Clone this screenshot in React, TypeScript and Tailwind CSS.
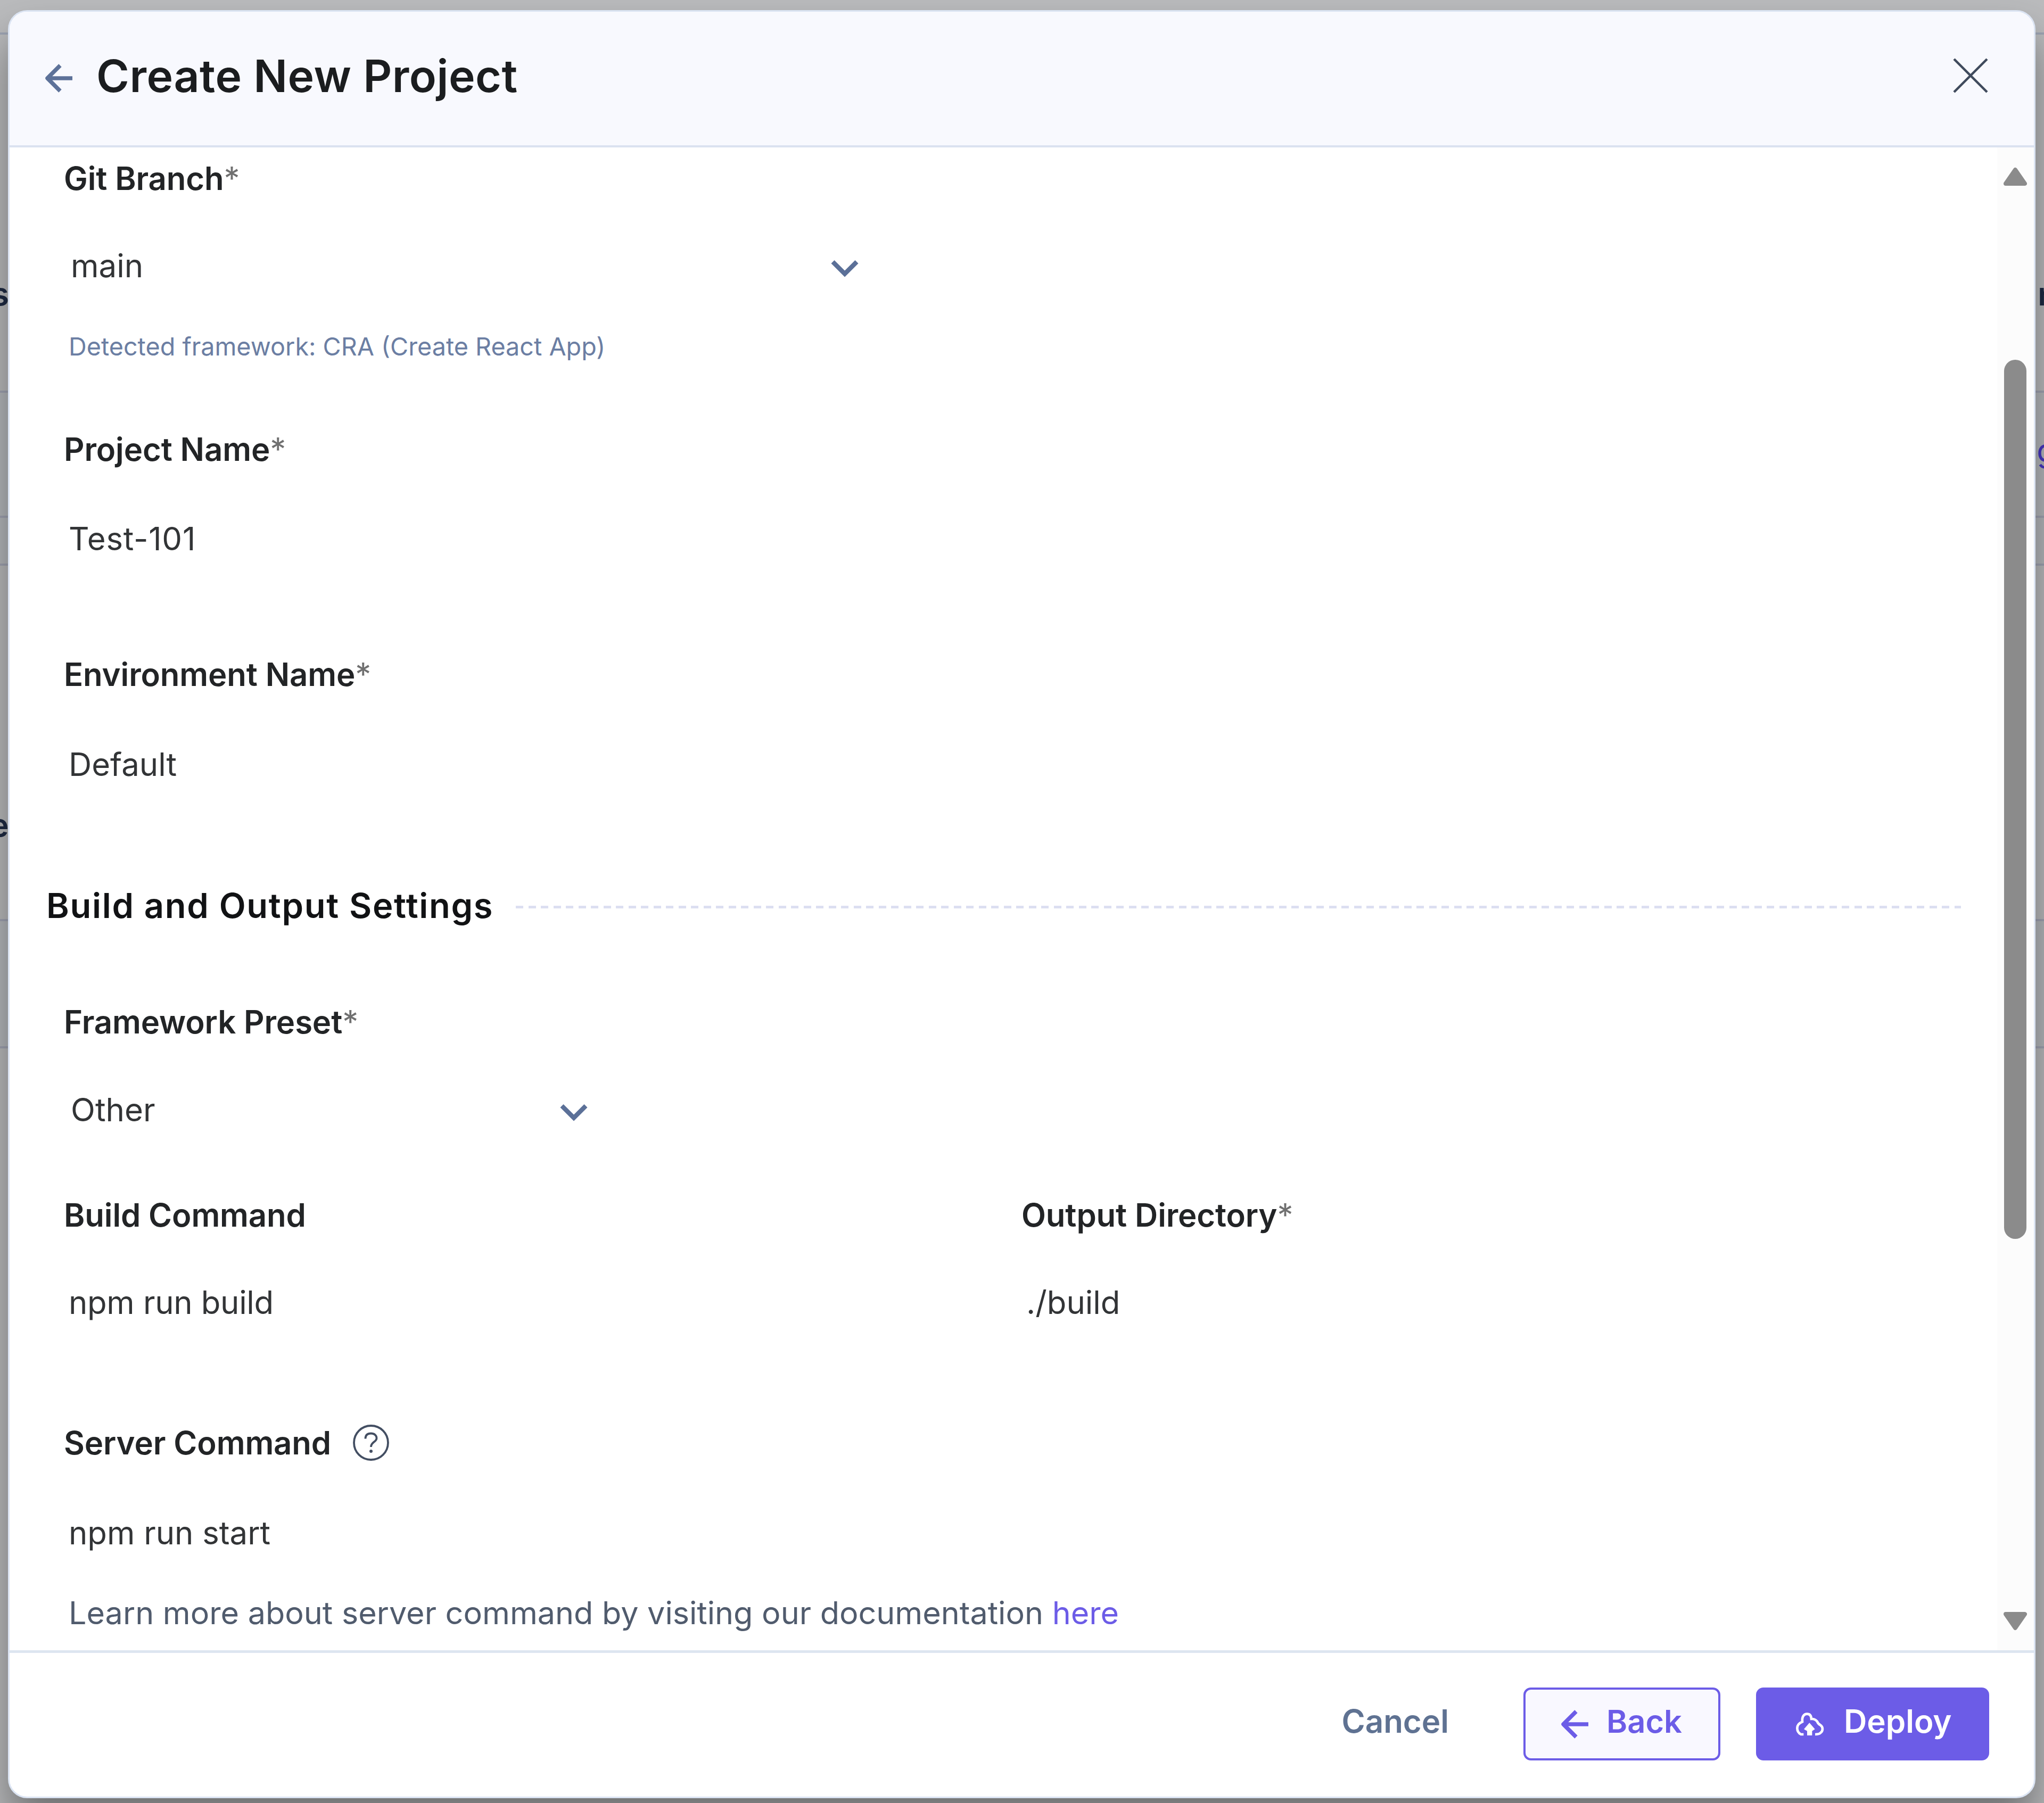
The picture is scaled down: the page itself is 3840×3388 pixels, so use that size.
import type { ReactNode } from "react";

interface FieldProps {
	label: string;
	required?: boolean;
	extra?: ReactNode;
	className?: string;
	children: ReactNode;
}

function Field(props: FieldProps) {
	return (
		<div className={`flex flex-col ${props.className ?? ""}`}>
			<div className="flex h-[60px] items-center text-[59.8px] leading-[60px] font-semibold tracking-[-0.1px] text-[#222426]">
				<span>
					{props.label}
					{props.required && <span className="font-normal text-[#707070]">*</span>}
				</span>
				{props.extra}
			</div>
			{props.children}
		</div>
	);
}

function Value(props: { className: string; children: ReactNode }) {
	return (
		<div className={`pl-[9px] text-[59.8px] leading-[60px] text-[#323436] ${props.className}`}>{props.children}</div>
	);
}

function Select(props: { className: string; value: string }) {
	return (
		<div className={`ml-[13px] flex h-[60px] items-center justify-between text-[60px] leading-[60px] text-[#323436] ${props.className}`}>
			<span>{props.value}</span>
			<svg className="mt-3 h-[34px] w-[52px]" viewBox="0 0 52 34" fill="none" stroke="#5b7098" strokeWidth="8.5">
				<path d="M3.5 4 L26 26.5 L48.5 4" />
			</svg>
		</div>
	);
}

function ArrowLeft(props: { color: string }) {
	return (
		<svg className="h-[54px] w-[54px]" viewBox="0 0 54 54" fill="none" stroke={props.color} strokeWidth="7.5">
			<path d="M53 27 H6 M30 3 L6 27 L30 51" strokeLinejoin="round" />
		</svg>
	);
}

function HelpIcon() {
	return (
		<svg className="ml-10 h-[70px] w-[70px]" viewBox="0 0 70 70" fill="none" stroke="#434e62" strokeWidth="3.8">
			<circle cx="35" cy="35" r="32" />
			<path d="M24.5 27.5 C24.5 20 29 17.5 35 17.5 C41 17.5 45.5 21 45.5 26.5 C45.5 34 35 33 35 43" />
			<circle cx="35" cy="51" r="3" fill="#434e62" stroke="none" />
		</svg>
	);
}

function DeployIcon() {
	return (
		<svg className="h-[45px] w-[55px]" viewBox="275 171 165 135" fill="none" stroke="#fff" strokeWidth="14">
			<path d="M324 297 H309 C295 290 288 276 288 262 C288 246 300 233 317 226 C314 200 324 182 344 182 C360 182 367 194 368 210 C382 209 393 215 401 225 C404 234 409 240 419 245 C434 256 435 276 420 288 C413 296 404 297 389 297" />
			<path d="M357 232 L388 268 L372 278 V303 H344 V278 L326 268 Z" fill="#fff" stroke="none" />
		</svg>
	);
}

// the dimmed page behind the dialog
function Backdrop() {
	return (
		<div className="absolute inset-0 flex flex-col overflow-hidden bg-[#babbbd] text-[60px] leading-[60px] font-semibold text-[#1d2a44]">
			<div className="h-[65px] border-b-4 border-[#9da4b3]"></div>
			<div className="flex h-[673px] justify-between border-b-4 border-[#a1a4b3] pt-[457px]">
				<span className="-ml-[16px]">s</span>
				<span className="-mr-[25px]">n</span>
			</div>
			<div className="flex h-[235px] justify-end border-b-4 border-[#a1a4b3] bg-[#b5b8bc] pt-[78px]">
				<span className="-mr-[23px] font-normal text-[#4636c4] underline">g</span>
			</div>
			<div className="h-[90px] border-b-4 border-[#a1a4b3] bg-[#b5b8bc]"></div>
			<div className="h-[668px] border-b-4 border-[#a1a4b3] pt-[457px]">
				<span className="-ml-[19px]">e</span>
			</div>
			<div className="h-[239px] border-b-4 border-[#a1a4b3] bg-[#b5b8bc]"></div>
		</div>
	);
}

function Scrollbar() {
	return (
		<div className="flex w-[69px] flex-col items-center bg-[#fcfcfc] pt-[37px] pr-[2px] pb-[37px]">
			<svg className="h-[35px] w-[44px]" viewBox="0 0 44 35" fill="#8b8b8b" stroke="#8b8b8b" strokeWidth="8" strokeLinejoin="round">
				<path d="M22 5 L40 31 H4 Z" />
			</svg>
			<div className="mt-[327px] h-[1652px] w-[42px] rounded-full bg-[#8b8b8b]"></div>
			<svg className="mt-auto h-[35px] w-[44px]" viewBox="0 0 44 35" fill="#8b8b8b" stroke="#8b8b8b" strokeWidth="8" strokeLinejoin="round">
				<path d="M22 30 L40 4 H4 Z" />
			</svg>
		</div>
	);
}

export default function App() {
	return (
		<div className="relative h-[3388px] w-[3840px] overflow-hidden font-['Inter',sans-serif]">
			<Backdrop />
			<div className="relative pt-[19px] pl-[15px]">
				<div className="flex h-[3360px] w-[3809px] flex-col overflow-hidden rounded-[36px] border-3 border-[#dbe4f3] bg-white shadow-[0_50px_80px_rgba(0,0,0,0.4)]">

					<div className="flex h-[255px] shrink-0 border-b-4 border-[#dbe2f0] bg-[#f8f9fe] pl-[65px]">
						<div className="pt-[98px]"><ArrowLeft color="#5d7299" /></div>
						<h1 className="ml-[44px] pt-[79px] text-[84px] leading-[84px] font-semibold tracking-[0.5px] text-[#1b1d1f]">Create New Project</h1>
						<svg className="mt-[87px] mr-[86px] ml-auto h-[66px] w-[66px]" viewBox="0 0 66 66" stroke="#3f4a5c" strokeWidth="4.5">
							<path d="M2 2 L64 64 M64 2 L2 64" />
						</svg>
					</div>

					<div className="flex h-[2824px] shrink-0">
						<div className="flex flex-1 flex-col pt-[28px] pl-[102px]">
							<Field label="Git Branch" required>
								<Select className="mt-[104px] w-[1480px]" value="main" />
								<p className="mt-[92px] pl-[9px] text-[46.7px] leading-[60px] text-[#6b7ea3]">Detected framework: CRA (Create React App)</p>
							</Field>
							<Field label="Project Name" required className="mt-[133px]">
								<Value className="mt-[108px] tracking-[0.8px]">Test-101</Value>
							</Field>
							<Field label="Environment Name" required className="mt-[195px]">
								<Value className="mt-[109px]">Default</Value>
							</Field>

							<div className="mt-[206px] -ml-[33px] flex h-[60px] items-center">
								<h2 className="text-[65px] leading-[60px] font-semibold tracking-[1.7px] text-[#111214]">Build and Output Settings</h2>
								<div className="mt-[5px] mr-[68px] ml-[42px] h-[5px] flex-1 bg-[repeating-linear-gradient(90deg,#dcdff1_0_14px,transparent_14px_23.5px)]"></div>
							</div>

							<Field label="Framework Preset" required className="mt-[158px]">
								<Select className="mt-[105px] w-[971px]" value="Other" />
							</Field>
							<div className="mt-[138px] flex">
								<Field label="Build Command" className="w-[1799px]">
									<Value className="mt-[104px] tracking-[-0.3px]">npm run build</Value>
								</Field>
								<Field label="Output Directory" required>
									<Value className="mt-[104px]">./build</Value>
								</Field>
							</div>
							<Field label="Server Command" extra={<HelpIcon />} className="mt-[204px]">
								<Value className="mt-[109px]">npm run start</Value>
								<p className="mt-[91px] pl-[9px] text-[59.25px] leading-[60px] text-[#505b6d]">
									Learn more about server command by visiting our documentation <a className="text-[#6c5ce7]">here</a>
								</p>
							</Field>
						</div>
						<Scrollbar />
					</div>

					<div className="flex flex-1 items-start justify-end border-t-5 border-[#dde5f0] pt-[65px] pr-[84px] text-[60px] leading-[60px] font-semibold">
						<button className="mr-[140px] pt-[33px] text-[#5f7292]">Cancel</button>
						<button className="flex h-[137px] w-[370px] items-center rounded-[14px] border-4 border-[#6c5ce7] bg-[#f9f8ff] pl-[65px] text-[59.5px] text-[#6c5ce7]">
							<ArrowLeft color="#6c5ce7" />
							<span className="mb-[11px] ml-[33px]">Back</span>
						</button>
						<button className="ml-[67px] flex h-[137px] w-[438px] items-center rounded-[14px] bg-[#6c5ce7] pl-[73px] text-white">
							<DeployIcon />
							<span className="mb-[11px] ml-[37px]">Deploy</span>
						</button>
					</div>

				</div>
			</div>
		</div>
	);
}
